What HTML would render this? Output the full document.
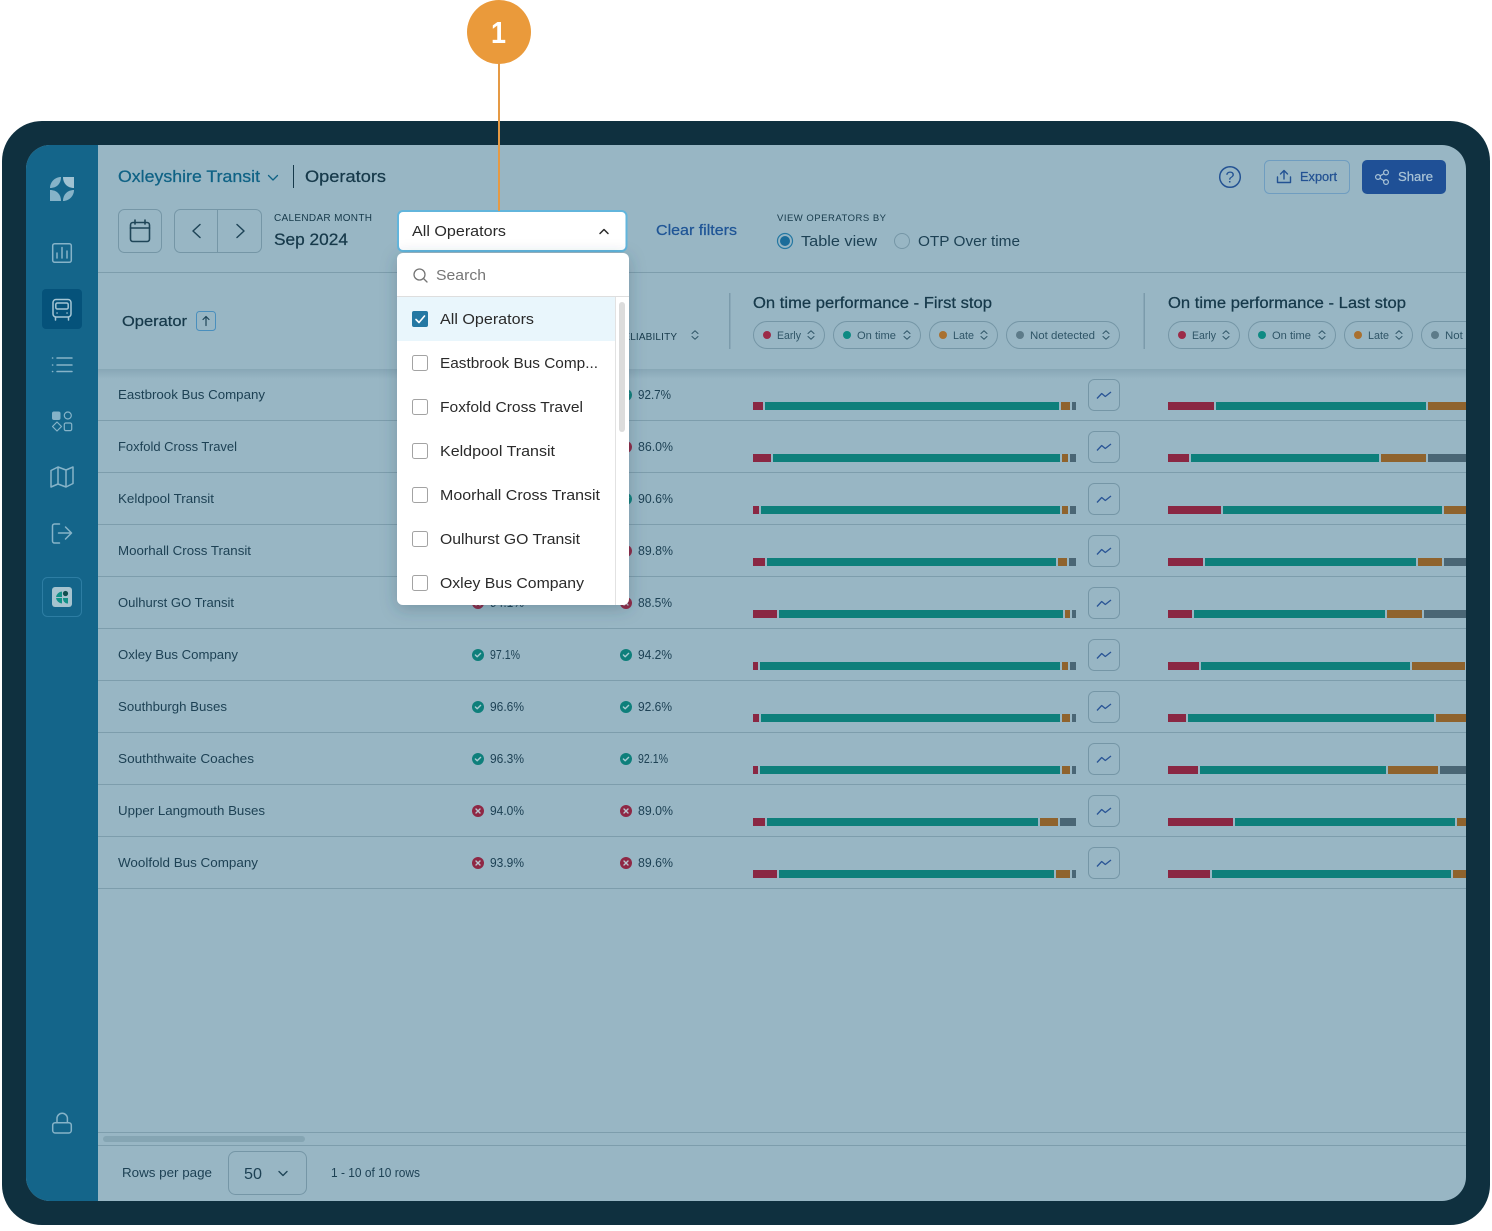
<!DOCTYPE html>
<html lang="en">
<head>
<meta charset="utf-8">
<title>Operators</title>
<style>
html,body{margin:0;padding:0;background:#fff;width:1492px;height:1231px;overflow:hidden}
svg{display:block}
text{font-family:"Liberation Sans",sans-serif;fill:#16394a}
.m{stroke:currentColor;stroke-width:.25}
.ic{fill:none;stroke-linecap:round;stroke-linejoin:round}
.n{font-size:13px;fill:#1d4154}
.p{font-size:12.5px;fill:#1d4154}
.c{font-size:11px;fill:#2f5567}
.d{font-size:15px;fill:#2a2a2a}
</style>
</head>
<body>
<svg xmlns="http://www.w3.org/2000/svg" width="1492" height="1231" viewBox="0 0 1492 1231">
<defs>
<clipPath id="inner"><rect x="26" y="145" width="1440" height="1056" rx="24"/></clipPath>
<clipPath id="panel"><rect x="397" y="253" width="232" height="352" rx="6"/></clipPath>
<linearGradient id="hs" x1="0" y1="0" x2="0" y2="1"><stop offset="0" stop-color="#4d7083" stop-opacity=".22"/><stop offset="1" stop-color="#4d7083" stop-opacity="0"/></linearGradient>
<filter id="sh" x="-20%" y="-20%" width="140%" height="140%"><feDropShadow dx="0" dy="4" stdDeviation="8" flood-color="#2c4c5c" flood-opacity=".3"/></filter>
<g id="ud" class="ic" stroke="#2f5567" stroke-width="1"><path d="M-3-1.5 0-4.2 3-1.5M-3 1.5 0 4.2 3 1.5"/></g>
<g id="ok"><circle r="6" fill="#0e7f7b"/><path d="M-2.600 0-.8 1.800 2.600-1.600" fill="none" stroke="#a9cbd2" stroke-width="1.400" stroke-linecap="round" stroke-linejoin="round"/></g>
<g id="no"><circle r="6" fill="#8f2744"/><path d="M-2-2 2 2M2-2-2 2" fill="none" stroke="#b9c6cf" stroke-width="1.400" stroke-linecap="round"/></g>
<g id="tr"><rect x="1088.500" y=".5" width="31" height="31" rx="6" fill="none" stroke="#7596a6"/><path d="M1097 19.500 1101.700 14.500 1105.300 17.500 1111 13" fill="none" stroke="#2a5596" stroke-width="1.300" stroke-linejoin="round"/></g>
<g id="cb"><rect x="412.500" y=".5" width="15" height="15" rx="2" fill="#fff" stroke="#a3a3a3"/></g>
</defs>

<!-- callout -->
<circle cx="499" cy="32" r="32" fill="#ea9a3b"/>
<text x="491" y="43" font-size="31" font-weight="700" style="fill:#fff" textLength="15" lengthAdjust="spacingAndGlyphs">1</text>

<!-- frame -->
<rect x="2" y="121" width="1488" height="1104" rx="40" fill="#0f303f"/>
<g clip-path="url(#inner)">
<rect x="26" y="145" width="1440" height="1056" fill="#98b6c4"/>
<rect x="26" y="145" width="72" height="1056" fill="#14658a"/>

<!-- sidebar -->
<path d="M50 188C50 182 55 177 61 177C61 183.500 57 188 50 188Z" fill="#86b3c8"/>
<path d="M63 177H74V188C67.500 188 63 183.500 63 177Z" fill="#a0c2d2"/>
<path d="M50 190C57 190 61 194.500 61 201H50Z" fill="#86b3c8"/>
<path d="M63 201C63 194.500 67.500 190 74 190C74 196 69 201 63 201Z" fill="#86b3c8"/>

<g class="ic" stroke="#86b3c8" stroke-width="1.500">
<rect x="52.700" y="243.700" width="18.600" height="18.600" rx="2"/>
<path d="M57 258V253M62 258V247.500M67 258V251"/>
</g>
<rect x="42" y="289" width="40" height="40" rx="4" fill="#05527a"/>
<g class="ic" stroke="#a5c6d5" stroke-width="1.500">
<rect x="53" y="299.500" width="18" height="17.500" rx="3"/>
<rect x="55.800" y="303" width="12.400" height="6" rx="1.500"/>
<path d="M55.500 317V320M68.500 317V320M57 313H57.100M67 313H67.100"/>
</g>
<g class="ic" stroke="#86b3c8" stroke-width="1.500">
<path d="M57 358H72M57 365H72M57 371.500H72M52.500 358H52.700M52.500 365H52.700M52.500 371.500H52.700"/>
<path d="M51 470.500 58 467 66 470 73 467V483.500L66 487 58 484 51 487ZM58 467V484M66 470V487"/>
<path d="M59.500 524H54.500A2 2 0 0 0 52.500 526V541A2 2 0 0 0 54.500 543H59.500M58.500 533H71.500M65.500 527 71.500 533 65.500 539"/>
<rect x="52.700" y="1122.700" width="18.600" height="10.300" rx="2.500"/>
<path d="M57 1122.500V1118.500A5.200 5.200 0 0 1 67.400 1118.500V1122.500"/>
</g>
<g class="ic" stroke="#86b3c8" stroke-width="1.200">
<circle cx="67.800" cy="415.500" r="3.500"/>
<path d="M57 422 61.500 426.500 57 431 52.500 426.500Z"/>
<rect x="64.300" y="423" width="7.400" height="7.600" rx="1.500"/>
</g>
<rect x="52" y="411.500" width="8.500" height="8.500" rx="2" fill="#86b3c8"/>
<rect x="42.500" y="577.500" width="39" height="39" rx="5" fill="none" stroke="#2d7da3"/>
<rect x="52" y="587" width="20" height="20" rx="3" fill="#a6c3cf"/>
<path d="M62 591.500A6.500 6.500 0 0 0 56 597H62ZM56 598A6.500 6.500 0 0 0 62 603.500V598Z" fill="#119188"/>
<path d="M63 598H68V603.500H67A4.500 5 0 0 1 63 598Z" fill="#119188"/>
<circle cx="65.500" cy="593.500" r="2.600" fill="#0f4f4f"/>

<!-- top -->
<text class="m" x="118" y="182" font-size="17" textLength="142" lengthAdjust="spacingAndGlyphs" style="fill:#0f6285;color:#0f6285">Oxleyshire Transit</text>
<path class="ic" d="M268.500 175.500 273 180 277.500 175.500" stroke="#0f6285" stroke-width="1.300"/>
<rect x="293" y="165" width="1" height="23" fill="#16394a"/>
<text class="m" x="305" y="182" font-size="17" textLength="81" lengthAdjust="spacingAndGlyphs" style="color:#16394a">Operators</text>

<rect x="118.500" y="209.500" width="43" height="43" rx="6" fill="none" stroke="#7596a6"/>
<g class="ic" stroke="#1f4558" stroke-width="1.600"><rect x="130.500" y="222.500" width="19" height="19" rx="2.500"/><path d="M130.500 228H149.500M135 220V224M145 220V224"/></g>
<rect x="174.500" y="209.500" width="87" height="43" rx="6" fill="none" stroke="#7596a6"/>
<rect x="217" y="210" width="1" height="42" fill="#7596a6"/>
<path class="ic" d="M200 224.500 193 231 200 237.500M237 224.500 244 231 237 237.500" stroke="#1f4558" stroke-width="1.500"/>
<text x="274" y="221" font-size="10" textLength="98" lengthAdjust="spacing">CALENDAR MONTH</text>
<text class="m" x="274" y="245" font-size="17" textLength="74" lengthAdjust="spacingAndGlyphs" style="color:#16394a">Sep 2024</text>

<text class="m" x="656" y="235" font-size="15" textLength="81" lengthAdjust="spacingAndGlyphs" style="fill:#1f5596;color:#1f5596">Clear filters</text>
<text x="777" y="221" font-size="9.500" textLength="109" lengthAdjust="spacing">VIEW OPERATORS BY</text>
<circle cx="785" cy="241" r="7.500" fill="none" stroke="#2478a3" stroke-width="1.200"/><circle cx="785" cy="241" r="5" fill="#1a6c9a"/>
<text x="801" y="246" font-size="15" textLength="76" lengthAdjust="spacingAndGlyphs" style="fill:#1d4154">Table view</text>
<circle cx="902" cy="241" r="7.500" fill="none" stroke="#7596a6"/>
<text x="918" y="246" font-size="15" textLength="102" lengthAdjust="spacingAndGlyphs" style="fill:#1d4154">OTP Over time</text>

<g class="ic" stroke="#235293" stroke-width="1.500"><circle cx="1230" cy="177" r="10.300"/></g>
<text x="1225.500" y="182.500" font-size="15.500" textLength="9" lengthAdjust="spacingAndGlyphs" style="fill:#235293">?</text>
<rect x="1264.500" y="160.500" width="85" height="33" rx="5" fill="none" stroke="#6f9dc0"/>
<path class="ic" d="M1277.500 177V182.500H1290.500V177M1284 179V171M1280.500 174 1284 170.500 1287.500 174" stroke="#235293" stroke-width="1.400"/>
<text class="m" x="1300" y="181" font-size="13" textLength="37" lengthAdjust="spacingAndGlyphs" style="fill:#235293;color:#235293">Export</text>
<rect x="1362" y="160" width="84" height="34" rx="5" fill="#1f5096"/>
<g class="ic" stroke="#a9c3d6" stroke-width="1.200"><circle cx="1378" cy="177" r="2.400"/><circle cx="1386" cy="172.500" r="2.400"/><circle cx="1386" cy="182" r="2.400"/><path d="M1380 175.800 1384 173.600M1380 178.200 1384 180.800"/></g>
<text class="m" x="1398" y="181" font-size="13" textLength="35" lengthAdjust="spacingAndGlyphs" style="fill:#a9c3d6;color:#a9c3d6">Share</text>

<rect x="98" y="272" width="1368" height="1" fill="#7d9dac"/>

<!-- table header -->
<text class="m" x="122" y="326" font-size="15" textLength="65" lengthAdjust="spacingAndGlyphs" style="color:#16394a">Operator</text>
<rect x="196.500" y="311.500" width="19" height="19" rx="3" fill="none" stroke="#4a8fbd"/>
<path class="ic" d="M206 325.500V316.500M203 319.500 206 316.500 209 319.500" stroke="#1f4558" stroke-width="1.200"/>
<text x="616" y="340" font-size="10" textLength="61" lengthAdjust="spacing" style="fill:#16394a">RELIABILITY</text>
<use href="#ud" x="695" y="335"/>
<rect x="729" y="293" width="1.500" height="56" fill="#7b9bab"/>
<rect x="1143.500" y="293" width="1.500" height="56" fill="#7b9bab"/>
<text class="m" x="753" y="308" font-size="15.500" textLength="239" lengthAdjust="spacingAndGlyphs" style="color:#16394a">On time performance - First stop</text>
<text class="m" x="1168" y="308" font-size="15.500" textLength="238" lengthAdjust="spacingAndGlyphs" style="color:#16394a">On time performance - Last stop</text>

<g fill="none" stroke="#7596a6">
<rect x="753.500" y="321.500" width="71" height="27" rx="13.500"/>
<rect x="833.500" y="321.500" width="87" height="27" rx="13.500"/>
<rect x="929.500" y="321.500" width="68" height="27" rx="13.500"/>
<rect x="1006.500" y="321.500" width="113" height="27" rx="13.500"/>
<rect x="1168.500" y="321.500" width="71" height="27" rx="13.500"/>
<rect x="1248.500" y="321.500" width="87" height="27" rx="13.500"/>
<rect x="1344.500" y="321.500" width="68" height="27" rx="13.500"/>
<rect x="1421.500" y="321.500" width="113" height="27" rx="13.500"/>
</g>
<circle cx="767" cy="335" r="4" fill="#9c2b48"/><circle cx="847" cy="335" r="4" fill="#0e8a83"/><circle cx="943" cy="335" r="4" fill="#a9702f"/><circle cx="1020" cy="335" r="4" fill="#5d7b89"/>
<circle cx="1182" cy="335" r="4" fill="#9c2b48"/><circle cx="1262" cy="335" r="4" fill="#0e8a83"/><circle cx="1358" cy="335" r="4" fill="#a9702f"/><circle cx="1435" cy="335" r="4" fill="#5d7b89"/>
<text class="c" x="777" y="339" textLength="24" lengthAdjust="spacingAndGlyphs">Early</text>
<text class="c" x="857" y="339" textLength="39" lengthAdjust="spacingAndGlyphs">On time</text>
<text class="c" x="953" y="339" textLength="21" lengthAdjust="spacingAndGlyphs">Late</text>
<text class="c" x="1030" y="339" textLength="65" lengthAdjust="spacingAndGlyphs">Not detected</text>
<text class="c" x="1192" y="339" textLength="24" lengthAdjust="spacingAndGlyphs">Early</text>
<text class="c" x="1272" y="339" textLength="39" lengthAdjust="spacingAndGlyphs">On time</text>
<text class="c" x="1368" y="339" textLength="21" lengthAdjust="spacingAndGlyphs">Late</text>
<text class="c" x="1445" y="339" textLength="65" lengthAdjust="spacingAndGlyphs">Not detected</text>
<use href="#ud" x="811" y="335"/><use href="#ud" x="907" y="335"/><use href="#ud" x="984" y="335"/><use href="#ud" x="1106" y="335"/>
<use href="#ud" x="1226" y="335"/><use href="#ud" x="1322" y="335"/><use href="#ud" x="1399" y="335"/>

<rect x="98" y="369" width="1368" height="10" fill="url(#hs)"/>

<!-- row lines -->
<path d="M98 420.500H1466M98 472.500H1466M98 524.500H1466M98 576.500H1466M98 628.500H1466M98 680.500H1466M98 732.500H1466M98 784.500H1466M98 836.500H1466M98 888.500H1466" stroke="#7d9dac" fill="none"/>

<!-- names -->
<text class="n" x="118" y="399" textLength="147" lengthAdjust="spacingAndGlyphs">Eastbrook Bus Company</text>
<text class="n" x="118" y="451" textLength="119" lengthAdjust="spacingAndGlyphs">Foxfold Cross Travel</text>
<text class="n" x="118" y="503" textLength="96" lengthAdjust="spacingAndGlyphs">Keldpool Transit</text>
<text class="n" x="118" y="555" textLength="133" lengthAdjust="spacingAndGlyphs">Moorhall Cross Transit</text>
<text class="n" x="118" y="607" textLength="116" lengthAdjust="spacingAndGlyphs">Oulhurst GO Transit</text>
<text class="n" x="118" y="659" textLength="120" lengthAdjust="spacingAndGlyphs">Oxley Bus Company</text>
<text class="n" x="118" y="711" textLength="109" lengthAdjust="spacingAndGlyphs">Southburgh Buses</text>
<text class="n" x="118" y="763" textLength="136" lengthAdjust="spacingAndGlyphs">Souththwaite Coaches</text>
<text class="n" x="118" y="815" textLength="147" lengthAdjust="spacingAndGlyphs">Upper Langmouth Buses</text>
<text class="n" x="118" y="867" textLength="140" lengthAdjust="spacingAndGlyphs">Woolfold Bus Company</text>

<!-- percent col 1 -->
<use href="#no" x="478" y="603"/><text class="p" x="490" y="607" textLength="34" lengthAdjust="spacingAndGlyphs">94.1%</text>
<use href="#ok" x="478" y="655"/><text class="p" x="490" y="659" textLength="30" lengthAdjust="spacingAndGlyphs">97.1%</text>
<use href="#ok" x="478" y="707"/><text class="p" x="490" y="711" textLength="34" lengthAdjust="spacingAndGlyphs">96.6%</text>
<use href="#ok" x="478" y="759"/><text class="p" x="490" y="763" textLength="34" lengthAdjust="spacingAndGlyphs">96.3%</text>
<use href="#no" x="478" y="811"/><text class="p" x="490" y="815" textLength="34" lengthAdjust="spacingAndGlyphs">94.0%</text>
<use href="#no" x="478" y="863"/><text class="p" x="490" y="867" textLength="34" lengthAdjust="spacingAndGlyphs">93.9%</text>
<!-- percent col 2 -->
<use href="#ok" x="626" y="395"/><text class="p" x="638" y="399" textLength="33" lengthAdjust="spacingAndGlyphs">92.7%</text>
<use href="#no" x="626" y="447"/><text class="p" x="638" y="451" textLength="35" lengthAdjust="spacingAndGlyphs">86.0%</text>
<use href="#ok" x="626" y="499"/><text class="p" x="638" y="503" textLength="35" lengthAdjust="spacingAndGlyphs">90.6%</text>
<use href="#no" x="626" y="551"/><text class="p" x="638" y="555" textLength="35" lengthAdjust="spacingAndGlyphs">89.8%</text>
<use href="#no" x="626" y="603"/><text class="p" x="638" y="607" textLength="34" lengthAdjust="spacingAndGlyphs">88.5%</text>
<use href="#ok" x="626" y="655"/><text class="p" x="638" y="659" textLength="34" lengthAdjust="spacingAndGlyphs">94.2%</text>
<use href="#ok" x="626" y="707"/><text class="p" x="638" y="711" textLength="34" lengthAdjust="spacingAndGlyphs">92.6%</text>
<use href="#ok" x="626" y="759"/><text class="p" x="638" y="763" textLength="30" lengthAdjust="spacingAndGlyphs">92.1%</text>
<use href="#no" x="626" y="811"/><text class="p" x="638" y="815" textLength="35" lengthAdjust="spacingAndGlyphs">89.0%</text>
<use href="#no" x="626" y="863"/><text class="p" x="638" y="867" textLength="35" lengthAdjust="spacingAndGlyphs">89.6%</text>

<!-- bars -->
<path fill="#8a2743" d="M753 402H763V410H753ZM1168 402H1214V410H1168ZM753 454H771V462H753ZM1168 454H1189V462H1168ZM753 506H759V514H753ZM1168 506H1221V514H1168ZM753 558H765V566H753ZM1168 558H1203V566H1168ZM753 610H777V618H753ZM1168 610H1192V618H1168ZM753 662H758V670H753ZM1168 662H1199V670H1168ZM753 714H759V722H753ZM1168 714H1186V722H1168ZM753 766H758V774H753ZM1168 766H1198V774H1168ZM753 818H765V826H753ZM1168 818H1233V826H1168ZM753 870H777V878H753ZM1168 870H1210V878H1168Z"/>
<path fill="#0e7f7b" d="M765 402H1059V410H765ZM1216 402H1426V410H1216ZM773 454H1060V462H773ZM1191 454H1379V462H1191ZM761 506H1060V514H761ZM1223 506H1442V514H1223ZM767 558H1056V566H767ZM1205 558H1416V566H1205ZM779 610H1063V618H779ZM1194 610H1385V618H1194ZM760 662H1060V670H760ZM1201 662H1410V670H1201ZM761 714H1060V722H761ZM1188 714H1434V722H1188ZM760 766H1060V774H760ZM1200 766H1386V774H1200ZM767 818H1038V826H767ZM1235 818H1455V826H1235ZM779 870H1054V878H779ZM1212 870H1451V878H1212Z"/>
<path fill="#8f632d" d="M1061 402H1070V410H1061ZM1428 402H1466V410H1428ZM1062 454H1068V462H1062ZM1381 454H1426V462H1381ZM1062 506H1068V514H1062ZM1444 506H1466V514H1444ZM1058 558H1067V566H1058ZM1418 558H1442V566H1418ZM1065 610H1070V618H1065ZM1387 610H1422V618H1387ZM1062 662H1068V670H1062ZM1412 662H1465V670H1412ZM1062 714H1070V722H1062ZM1436 714H1466V722H1436ZM1062 766H1070V774H1062ZM1388 766H1438V774H1388ZM1040 818H1058V826H1040ZM1457 818H1466V826H1457ZM1056 870H1070V878H1056ZM1453 870H1466V878H1453Z"/>
<path fill="#4a6675" d="M1072 402H1076V410H1072ZM1070 454H1076V462H1070ZM1428 454H1466V462H1428ZM1070 506H1076V514H1070ZM1069 558H1076V566H1069ZM1444 558H1466V566H1444ZM1072 610H1076V618H1072ZM1424 610H1466V618H1424ZM1070 662H1076V670H1070ZM1072 714H1076V722H1072ZM1072 766H1076V774H1072ZM1440 766H1466V774H1440ZM1060 818H1076V826H1060ZM1072 870H1076V878H1072Z"/>

<!-- trend buttons -->
<use href="#tr" y="379"/><use href="#tr" y="431"/><use href="#tr" y="483"/><use href="#tr" y="535"/><use href="#tr" y="587"/>
<use href="#tr" y="639"/><use href="#tr" y="691"/><use href="#tr" y="743"/><use href="#tr" y="795"/><use href="#tr" y="847"/>

<!-- footer -->
<rect x="98" y="1132" width="1368" height="1" fill="#7d9dac"/>
<rect x="103" y="1136" width="202" height="6" rx="3" fill="#85a5b3"/>
<rect x="98" y="1145" width="1368" height="1" fill="#7d9dac"/>
<text class="n" x="122" y="1177" textLength="90" lengthAdjust="spacingAndGlyphs">Rows per page</text>
<rect x="228.500" y="1151.500" width="78" height="43" rx="7" fill="none" stroke="#7596a6"/>
<text x="244" y="1179" font-size="15.500" textLength="18" lengthAdjust="spacingAndGlyphs" style="fill:#1d4154">50</text>
<path class="ic" d="M279 1171.500 283 1175.500 287 1171.500" stroke="#1f4558" stroke-width="1.400"/>
<text class="n" x="331" y="1177" textLength="89" lengthAdjust="spacingAndGlyphs">1 - 10 of 10 rows</text>

<!-- select -->
<rect x="398" y="211" width="228.500" height="40" rx="5" fill="#fff" stroke="#62b5dc" stroke-width="2"/>
<text class="d" x="412" y="236" textLength="94" lengthAdjust="spacingAndGlyphs">All Operators</text>
<path class="ic" d="M600 233.500 604 229.500 608 233.500" stroke="#2a2a2a" stroke-width="1.500"/>

<!-- dropdown -->
<rect x="397" y="253" width="232" height="352" rx="6" fill="#fff" filter="url(#sh)"/>
<g clip-path="url(#panel)">
<rect x="397" y="296" width="232" height="1" fill="#dedede"/>
<rect x="397" y="297" width="218" height="44" fill="#e9f6fc"/>
<rect x="615" y="297" width="1" height="308" fill="#e2e2e2"/>
<rect x="619" y="302" width="6" height="130" rx="3" fill="#dcdcdc"/>
</g>
<g class="ic" stroke="#757575" stroke-width="1.300"><circle cx="419.500" cy="274.500" r="5.500"/><path d="M423.500 278.500 427 282"/></g>
<text x="436" y="280" font-size="15" textLength="50" lengthAdjust="spacingAndGlyphs" style="fill:#767676">Search</text>
<rect x="412" y="311" width="16" height="16" rx="2" fill="#2478a3"/>
<path class="ic" d="M416 319.500 419 322.500 424.500 316" stroke="#fff" stroke-width="1.600"/>
<text class="d" x="440" y="324" textLength="94" lengthAdjust="spacingAndGlyphs">All Operators</text>
<use href="#cb" y="355"/><text class="d" x="440" y="368" textLength="158" lengthAdjust="spacingAndGlyphs">Eastbrook Bus Comp...</text>
<use href="#cb" y="399"/><text class="d" x="440" y="412" textLength="143" lengthAdjust="spacingAndGlyphs">Foxfold Cross Travel</text>
<use href="#cb" y="443"/><text class="d" x="440" y="456" textLength="115" lengthAdjust="spacingAndGlyphs">Keldpool Transit</text>
<use href="#cb" y="487"/><text class="d" x="440" y="500" textLength="160" lengthAdjust="spacingAndGlyphs">Moorhall Cross Transit</text>
<use href="#cb" y="531"/><text class="d" x="440" y="544" textLength="140" lengthAdjust="spacingAndGlyphs">Oulhurst GO Transit</text>
<use href="#cb" y="575"/><text class="d" x="440" y="588" textLength="144" lengthAdjust="spacingAndGlyphs">Oxley Bus Company</text>
</g>
<!-- callout line over the frame -->
<rect x="498" y="62" width="2" height="149" fill="#e59a45"/>
</svg>
</body>
</html>
